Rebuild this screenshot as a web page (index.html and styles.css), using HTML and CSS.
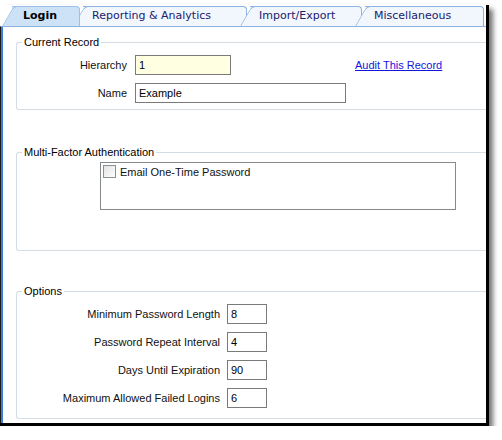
FILE: index.html
```html
<!DOCTYPE html>
<html lang="en">
<head>
<meta charset="utf-8">
<title>Login Settings</title>
<link rel="stylesheet" href="styles.css">
</head>
<body>
<div class="frame">
  <div class="tabs">
    <div class="tab tab-login selected">Login</div>
    <div class="tab tab-reporting">Reporting &amp; Analytics</div>
    <div class="tab tab-import">Import/Export</div>
    <div class="tab tab-misc">Miscellaneous</div>
  </div>
  <div class="panel">
    <fieldset class="group group-record">
      <legend>Current Record</legend>
      <div class="row">
        <label class="lbl">Hierarchy</label>
        <input class="field field-hier" type="text" value="1">
        <a class="audit" href="#">Audit This Record</a>
      </div>
      <div class="row">
        <label class="lbl">Name</label>
        <input class="field field-name" type="text" value="Example">
      </div>
    </fieldset>
    <fieldset class="group group-mfa">
      <legend>Multi-Factor Authentication</legend>
      <div class="listbox">
        <label class="check"><span class="box"></span>Email One-Time Password</label>
      </div>
    </fieldset>
    <fieldset class="group group-options">
      <legend>Options</legend>
      <div class="row">
        <label class="lbl">Minimum Password Length</label>
        <input class="field field-num" type="text" value="8">
      </div>
      <div class="row">
        <label class="lbl">Password Repeat Interval</label>
        <input class="field field-num" type="text" value="4">
      </div>
      <div class="row">
        <label class="lbl">Days Until Expiration</label>
        <input class="field field-num" type="text" value="90">
      </div>
      <div class="row">
        <label class="lbl">Maximum Allowed Failed Logins</label>
        <input class="field field-num" type="text" value="6">
      </div>
    </fieldset>
  </div>
</div>
</body>
</html>
```

FILE: styles.css
```css
html, body {
  margin: 0;
  background: #fff;
}
body {
  font-family: "Liberation Sans", Arial, sans-serif;
  font-size: 11px;
  color: #000;
}

.frame {
  box-sizing: border-box;
  width: 489px;
  margin-top: 5px;
  background: #fff;
  border-right: 3px solid #000;
  border-bottom: 3px solid #000;
  box-shadow: 4px 4px 5px rgba(0, 0, 0, 0.55);
}

/* ---------- tabs ---------- */
.tabs {
  display: flex;
  box-sizing: border-box;
  height: 21px;
  padding: 1px 0 0 2px;
}
.tab {
  position: relative;
  z-index: 1;
  box-sizing: border-box;
  height: 20px;
  line-height: 20px;
  margin-left: -7px;
  padding-left: 19px;
  font-family: "DejaVu Sans", Verdana, sans-serif;
  font-size: 11px;
  color: #20206e;
  white-space: nowrap;
}
.tab::before {
  content: "";
  position: absolute;
  top: 0;
  bottom: 0;
  left: 10px;
  right: 0;
  border-top: 1px solid #8db3e2;
  border-right: 1px solid #8db3e2;
  border-radius: 0 4px 0 0;
  background: #f1f7fd;
  z-index: -1;
}
.tab::after {
  content: "";
  position: absolute;
  top: 0;
  bottom: 0;
  left: 0;
  width: 16px;
  border-top: 1px solid #8db3e2;
  border-left: 1px solid #8db3e2;
  border-radius: 5px 0 0 0;
  background: #f1f7fd;
  transform: skewX(-30deg);
  transform-origin: 0 100%;
  z-index: -1;
}
.tab.selected {
  z-index: 5;
  color: #000;
  font-weight: bold;
  padding-left: 21px;
}
.tab.selected::before,
.tab.selected::after {
  background: #cde2f7;
  border-color: #9dc0e8;
}
.tab-login { margin-left: 0; width: 78px; }
.tab-reporting { width: 174px; }
.tab-import { width: 122px; }
.tab-misc { width: 129px; }

/* ---------- panel ---------- */
.panel {
  border-top: 1px solid #8db3e2;
  border-left: 1px solid #1c1c1c;
  box-shadow: inset 2px 0 0 #3b7dd8;
  padding: 9px 0 4px 0;
}

.group {
  margin: 0 0 0 15px;
  padding: 6px 0 6px 5px;
  border: 1px solid #d5dde4;
  border-right: 0;
  border-radius: 3px 0 0 3px;
  min-width: 0;
}
.group legend {
  padding: 0 2px;
  margin: 0;
  line-height: 13px;
  font-size: 11px;
}
.group-mfa {
  margin-top: 36px;
  padding: 3px 0 40px 5px;
}
.group-options {
  margin-top: 34px;
  padding: 6px 0 10px 5px;
}

.row {
  display: flex;
  align-items: center;
  height: 20px;
}
.row + .row {
  margin-top: 8px;
}
.lbl {
  width: 105px;
  margin-right: 8px;
  text-align: right;
  color: #111;
}
.group-options .lbl {
  width: 198px;
  margin-right: 7px;
}

.field {
  box-sizing: border-box;
  height: 20px;
  margin: 0;
  padding: 0 3px;
  border: 1px solid #7a7a7a;
  border-radius: 0;
  background: #fff;
  font-family: "Liberation Sans", Arial, sans-serif;
  font-size: 11px;
  color: #000;
  outline: none;
}
.field-hier { width: 96px; background: #ffffe1; }
.field-name { width: 211px; }
.field-num { width: 40px; }

.audit {
  margin-left: 124px;
  color: #1414dc;
  text-decoration: underline;
}

.listbox {
  box-sizing: border-box;
  width: 356px;
  height: 48px;
  margin-left: 78px;
  padding: 2px;
  border: 1px solid #858a8f;
}
.check {
  display: flex;
  align-items: center;
  gap: 4px;
  height: 13px;
  color: #111;
}
.box {
  box-sizing: border-box;
  width: 13px;
  height: 13px;
  border: 1px solid #8e8f8f;
  background: linear-gradient(135deg, #e4e4e4, #fdfdfd);
}
```
